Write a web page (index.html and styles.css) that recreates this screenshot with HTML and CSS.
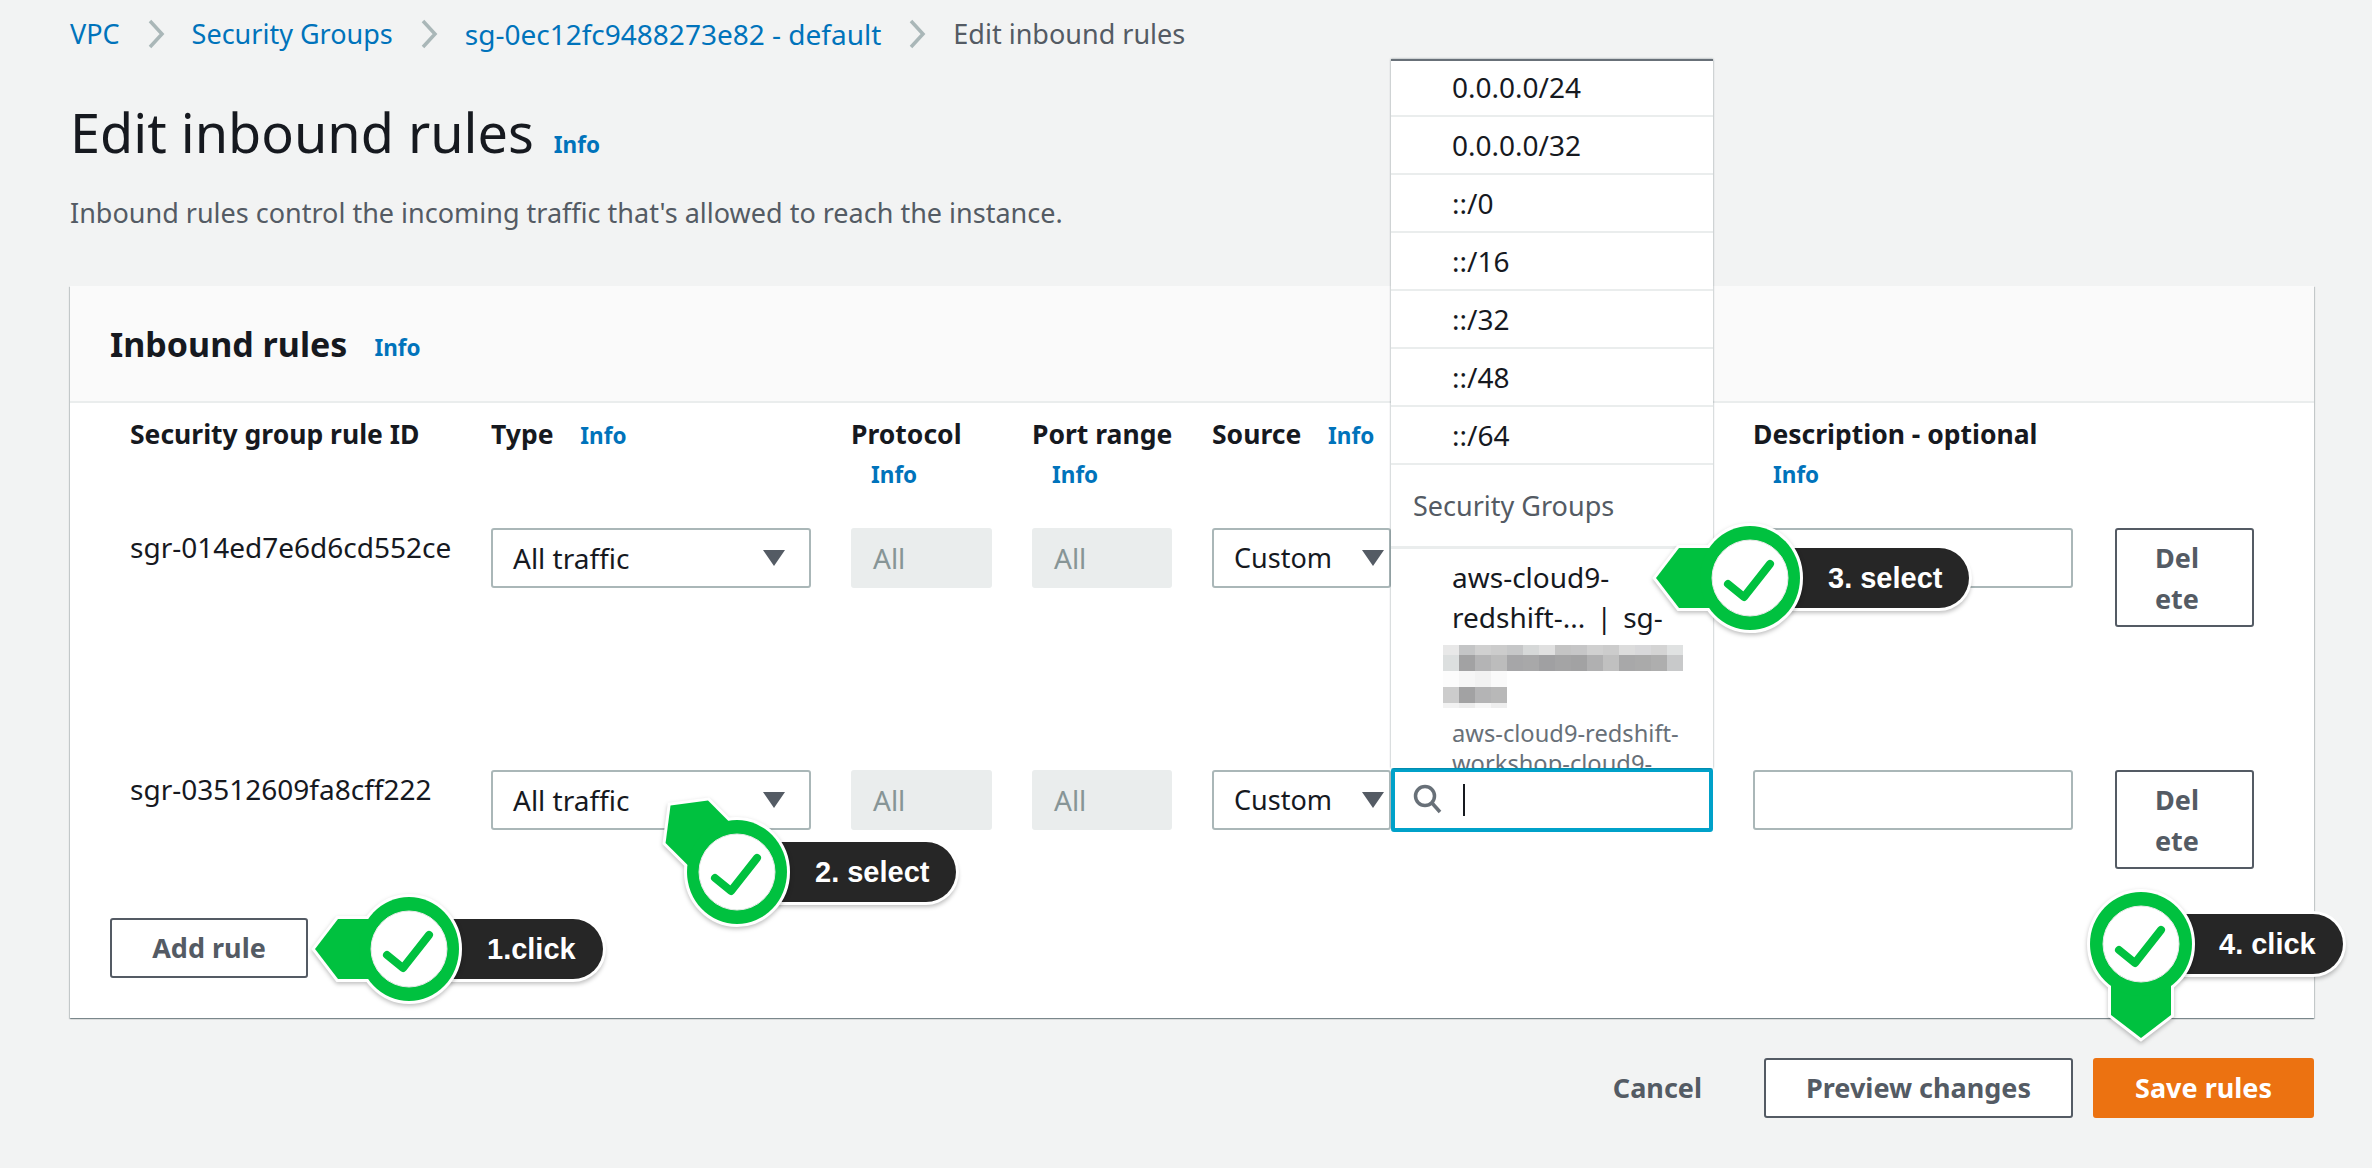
FILE: index.html
```html
<!DOCTYPE html>
<html lang="en">
<head>
    <meta charset="UTF-8">
    <meta name="viewport" content="width=device-width, initial-scale=1.0">
    <title>Edit inbound rules</title>
    <link rel="stylesheet" href="styles.css">
</head>
<body>
    <svg class="defs" width="0" height="0">
        <defs>
            <g id="mark">
                <circle class="mark-inner" r="38"></circle>
                <path class="mark-check" d="M-22 6 L-6 19 L20 -14"></path>
            </g>
            <path id="arrow" d="M-94 0 L-71 -30 L-20 -30 L-20 30 L-71 30 Z"></path>
        </defs>
    </svg>

    <nav class="crumbs">
        <a href="#">VPC</a>
        <svg class="crumb-sep" viewBox="0 0 18 30"><path d="M3 2 L15 15 L3 28"></path></svg>
        <a href="#">Security Groups</a>
        <svg class="crumb-sep" viewBox="0 0 18 30"><path d="M3 2 L15 15 L3 28"></path></svg>
        <a class="crumb-id" href="#">sg-0ec12fc9488273e82 - default</a>
        <svg class="crumb-sep" viewBox="0 0 18 30"><path d="M3 2 L15 15 L3 28"></path></svg>
        <span>Edit inbound rules</span>
    </nav>

    <header class="page-head">
        <h1>Edit inbound rules <a class="info" href="#">Info</a></h1>
        <p>Inbound rules control the incoming traffic that's allowed to reach the instance.</p>
    </header>

    <section class="panel">
        <div class="panel-head">
            <h2>Inbound rules</h2>
            <a class="info" href="#">Info</a>
        </div>
        <div class="panel-body">
            <div class="grid head-row">
                <div class="col-id">Security group rule ID</div>
                <div class="inline-head">Type <a class="info" href="#">Info</a></div>
                <div>Protocol <a class="info stacked" href="#">Info</a></div>
                <div>Port range <a class="info stacked" href="#">Info</a></div>
                <div class="inline-head">Source <a class="info" href="#">Info</a></div>
                <div>Description - optional <a class="info stacked" href="#">Info</a></div>
                <div></div>
            </div>

            <div class="grid rule-row">
                <div class="col-id rule-id">sgr-014ed7e6d6cd552ce</div>
                <div class="select">All traffic <i class="caret"></i></div>
                <div class="field disabled">All</div>
                <div class="field disabled">All</div>
                <div class="source">
                    <div class="select">Custom <i class="caret"></i></div>
                </div>
                <div class="field"></div>
                <button class="btn delete">Delete</button>
            </div>

            <div class="grid rule-row last">
                <div class="col-id rule-id">sgr-03512609fa8cff222</div>
                <div class="select">All traffic <i class="caret"></i></div>
                <div class="field disabled">All</div>
                <div class="field disabled">All</div>
                <div class="source">
                    <div class="select">Custom <i class="caret"></i></div>
                    <div class="search">
                        <svg class="search-icon" viewBox="0 0 30 30"><circle cx="12" cy="12" r="9.5"></circle><path d="M19 19 L27 28"></path></svg>
                        <span class="cursor"></span>
                        <div class="menu">
                            <div class="menu-item">0.0.0.0/24</div>
                            <div class="menu-item">0.0.0.0/32</div>
                            <div class="menu-item">::/0</div>
                            <div class="menu-item">::/16</div>
                            <div class="menu-item">::/32</div>
                            <div class="menu-item">::/48</div>
                            <div class="menu-item">::/64</div>
                            <div class="menu-group">Security Groups</div>
                            <div class="menu-sg">
                                <div class="menu-name">aws-cloud9-<br>redshift-... | sg-</div>
                                <div class="mosaic">
                                    <div class="mosaic-a"></div>
                                    <div class="mosaic-b"></div>
                                    <div class="mosaic-c"></div>
                                    <div class="mosaic-d"></div>
                                    <div class="mosaic-e"></div>
                                </div>
                                <div class="menu-sub">aws-cloud9-redshift-workshop-cloud9-</div>
                            </div>
                        </div>
                    </div>
                </div>
                <div class="field"></div>
                <button class="btn delete">Delete</button>
            </div>

            <button class="btn add-rule">Add rule</button>
        </div>
    </section>

    <footer class="actions">
        <button class="btn plain">Cancel</button>
        <button class="btn">Preview changes</button>
        <button class="btn primary">Save rules</button>
    </footer>

    <!-- step callouts -->
    <div class="badge badge-1">
        <div class="pill">1.click</div>
        <svg class="marker" viewBox="-120 -120 240 240">
            <use href="#arrow" class="mark-edge"></use><ellipse class="mark-edge" rx="50" ry="52"></ellipse>
            <use href="#arrow" class="mark-fill"></use><ellipse class="mark-fill" rx="50" ry="52"></ellipse>
            <use href="#mark"></use>
        </svg>
    </div>
    <div class="badge badge-2">
        <div class="pill">2. select</div>
        <svg class="marker" viewBox="-120 -120 240 240">
            <use href="#arrow" class="mark-edge" transform="rotate(45)"></use><ellipse class="mark-edge" rx="50" ry="52"></ellipse>
            <use href="#arrow" class="mark-fill" transform="rotate(45)"></use><ellipse class="mark-fill" rx="50" ry="52"></ellipse>
            <use href="#mark"></use>
        </svg>
    </div>
    <div class="badge badge-3">
        <div class="pill">3. select</div>
        <svg class="marker" viewBox="-120 -120 240 240">
            <use href="#arrow" class="mark-edge"></use><ellipse class="mark-edge" rx="50" ry="52"></ellipse>
            <use href="#arrow" class="mark-fill"></use><ellipse class="mark-fill" rx="50" ry="52"></ellipse>
            <use href="#mark"></use>
        </svg>
    </div>
    <div class="badge badge-4">
        <div class="pill">4. click</div>
        <svg class="marker" viewBox="-120 -120 240 240">
            <use href="#arrow" class="mark-edge" transform="rotate(-90)"></use><ellipse class="mark-edge" rx="51" ry="52"></ellipse>
            <use href="#arrow" class="mark-fill" transform="rotate(-90)"></use><ellipse class="mark-fill" rx="51" ry="52"></ellipse>
            <use href="#mark"></use>
        </svg>
    </div>
</body>
</html>
```

FILE: styles.css
```css
* {
    box-sizing: border-box;
}

html, body {
    height: 100%;
}

body {
    margin: 0;
    position: relative;
    overflow: hidden;
    font-family: "Noto Sans", "Open Sans", Arial, sans-serif;
    font-size: 27px;
    line-height: 40px;
    color: #16191f;
    background: #f2f3f3;
}

a {
    color: #0073bb;
    text-decoration: none;
}

.defs {
    position: absolute;
}

/* breadcrumb */
.crumbs {
    display: flex;
    align-items: center;
    gap: 27px;
    height: 40px;
    margin: 14px 0 0 70px;
    color: #545b64;
}

.crumb-id {
    font-size: 28px;
}

.crumb-sep {
    width: 18px;
    height: 30px;
    fill: none;
    stroke: #aab7b8;
    stroke-width: 3.5;
}

/* title */
.page-head {
    margin-left: 70px;
}

.page-head h1 {
    margin: 44px 0 0;
    font-size: 54px;
    line-height: 68px;
    font-weight: 400;
}

.page-head p {
    margin: 27px 0 0;
    color: #545b64;
}

.info {
    font-size: 22.5px;
    font-weight: 700;
    line-height: 40px;
}

.page-head .info {
    margin-left: 6px;
}

/* panel */
.panel {
    margin: 53px 58px 0 70px;
    background: #fff;
    box-shadow: 0 1px 1px 0 rgba(0, 28, 36, 0.3), 1px 1px 1px 0 rgba(0, 28, 36, 0.15), -1px 1px 1px 0 rgba(0, 28, 36, 0.15);
}

.panel-head {
    display: flex;
    align-items: center;
    gap: 27px;
    height: 117px;
    padding-left: 40px;
    background: #fafafa;
    border-bottom: 2px solid #eaeded;
}

.panel-head h2 {
    margin: 0;
    font-size: 34px;
    font-weight: 700;
}

.panel-head .info {
    margin-top: 9px;
}

.panel-body {
    padding: 11px 0 40px 40px;
}

.grid {
    display: grid;
    grid-template-columns: 341px 320px 141px 140px 501px 320px 139px;
    column-gap: 40px;
}

.head-row {
    font-size: 26.5px;
    font-weight: 700;
    height: 114px;
    white-space: nowrap;
}

.stacked {
    display: block;
    margin: 1px 0 0 20px;
}

.inline-head .info {
    margin-left: 20px;
}

.col-id {
    padding-left: 20px;
}

.rule-row {
    height: 242px;
    align-items: start;
}

.rule-row.last {
    height: 148px;
}

.rule-id {
    font-size: 28px;
    white-space: nowrap;
    margin-top: -1px;
}

.select,
.field {
    height: 60px;
    padding: 0 20px;
    font-size: 28px;
    line-height: 56px;
    background: #fff;
    border: 2px solid #aab7b8;
    border-radius: 3px;
}

.select {
    position: relative;
}

.caret {
    position: absolute;
    right: 24px;
    top: 20px;
    width: 0;
    height: 0;
    border-left: 11px solid transparent;
    border-right: 11px solid transparent;
    border-top: 16px solid #545b64;
}

.disabled {
    color: #879596;
    background: #eaeded;
    border-color: #eaeded;
}

.source {
    display: flex;
}

.source .select {
    width: 179px;
    flex: none;
    font-size: 27px;
}

.source .caret {
    right: 5px;
}

/* open source picker */
.search {
    position: relative;
    width: 323px;
    height: 64px;
    margin-top: -2px;
    background: #fff;
    border: 4px solid #00a1c9;
    border-radius: 3px;
    z-index: 2;
}

.search-icon {
    position: absolute;
    left: 18px;
    top: 12px;
    width: 30px;
    height: 30px;
    fill: none;
    stroke: #687078;
    stroke-width: 3.5;
}

.cursor {
    position: absolute;
    left: 68px;
    top: 12px;
    width: 2px;
    height: 32px;
    background: #16191f;
}

.menu {
    position: absolute;
    left: -4px;
    right: -4px;
    bottom: 60px;
    height: 709px;
    overflow: hidden;
    font-size: 28px;
    background: #fff;
    border-top: 2px solid #687078;
    box-shadow: 0 0 2px rgba(0, 28, 36, 0.45);
}

.menu-item {
    height: 58px;
    padding-left: 61px;
    line-height: 56px;
    border-bottom: 2px solid #eaeded;
}

.menu-item:first-child {
    height: 56px;
    line-height: 52px;
}

.menu-group {
    height: 84px;
    padding: 21px 0 0 22px;
    font-size: 27px;
    color: #545b64;
    border-bottom: 3px solid #eaeded;
}

.menu-sg {
    padding: 8px 20px 0 61px;
}

.menu-name {
    word-spacing: 4px;
}

.menu-sub {
    font-size: 23.7px;
    line-height: 30px;
    margin-top: 10px;
    color: #687078;
}

/* blurred id, one row of 16px cells per class */
.mosaic {
    width: 240px;
    margin: 8px 0 0 -9px;
}

.mosaic-a {
    height: 10px;
    background: linear-gradient(90deg, #e8e8e8 16px, #c4c5c6 0 32px, #d0d0d0 0 48px, #cccccc 0 64px, #c6c7c8 0 80px, #d6d8d8 0 96px, #e0e0e0 0 112px, #c4c4c4 0 128px, #c6c6c7 0 144px, #d0d0d0 0 160px, #cccccc 0 176px, #dcdcdc 0 192px, #d8d8da 0 208px, #d4d4d4 0 224px, #e0e2e2 0);
}

.mosaic-b {
    height: 16px;
    background: linear-gradient(90deg, #dcdfdf 16px, #a2a2a3 0 32px, #b4b4b5 0 48px, #bcbcbc 0 64px, #a6a6a8 0 80px, #a8a8a9 0 96px, #a0a0a2 0 112px, #a4a4a5 0 128px, #a2a2a3 0 144px, #b0b0b1 0 160px, #c0c0c0 0 176px, #a8a8a9 0 192px, #aaaaaa 0 208px, #aeaeae 0 224px, #c8c9ca 0);
}

.mosaic-c {
    width: 64px;
    height: 16px;
    background: linear-gradient(90deg, #fcfcfc 16px, #f6f6f6 0 32px, #f2f2f2 0 48px, #fafafa 0);
}

.mosaic-d {
    width: 64px;
    height: 16px;
    background: linear-gradient(90deg, #cccccc 16px, #a2a2a3 0 32px, #b4b4b5 0 48px, #b8b8b8 0);
}

.mosaic-e {
    width: 64px;
    height: 5px;
    background: linear-gradient(90deg, #f2f2f2 16px, #ececec 0 32px, #f6f6f6 0 48px, #eeeeee 0);
}

/* buttons */
.btn {
    height: 60px;
    padding: 0 40px;
    font: 700 27px/40px "Noto Sans", "Open Sans", Arial, sans-serif;
    color: #545b64;
    background: #fff;
    border: 2px solid #545b64;
    border-radius: 3px;
}

.delete {
    height: 99px;
    padding: 0 38px;
    line-height: 41px;
    text-align: left;
    word-break: break-all;
    margin-left: 2px;
    width: 139px;
}

.add-rule {
    width: 198px;
    padding: 0;
}

.actions {
    display: flex;
    justify-content: flex-end;
    gap: 20px;
    margin: 40px 58px 0 0;
}

.plain {
    background: transparent;
    border-color: transparent;
}

.primary {
    color: #fff;
    background: #ec7211;
    border-color: #ec7211;
}

/* step callouts */
.badge {
    position: absolute;
    width: 0;
    height: 0;
    z-index: 5;
}

.badge-1 { left: 409px; top: 949px; }
.badge-2 { left: 737px; top: 872px; }
.badge-3 { left: 1750px; top: 578px; }
.badge-4 { left: 2141px; top: 944px; }

.pill {
    position: absolute;
    left: 0;
    top: -30px;
    height: 60px;
    padding: 0 27px 0 78px;
    font-family: "Liberation Sans", Arial, sans-serif;
    font-size: 29px;
    font-weight: 700;
    line-height: 60px;
    white-space: nowrap;
    color: #fff;
    background: #262626;
    border-radius: 0 30px 30px 0;
    box-shadow: 0 0 0 3px #fff, 1px 4px 4px 1px rgba(0, 0, 0, 0.25);
}

.marker {
    position: absolute;
    left: -120px;
    top: -120px;
    width: 240px;
    height: 240px;
    filter: drop-shadow(0 2px 2px rgba(0, 0, 0, 0.25));
}

.mark-edge {
    fill: #fff;
    stroke: #fff;
    stroke-width: 6;
}

.mark-fill {
    fill: #00c13f;
}

.mark-inner {
    fill: #fff;
    stroke: #e8e8e8;
    stroke-width: 1;
}

.mark-check {
    fill: none;
    stroke: #00c13f;
    stroke-width: 8;
    stroke-linecap: round;
    stroke-linejoin: round;
}
```
